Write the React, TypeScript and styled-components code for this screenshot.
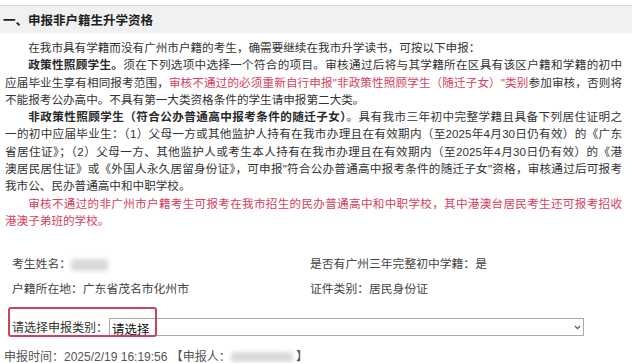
import React from "react";
import styled, { createGlobalStyle } from "styled-components";

const GlobalStyle = createGlobalStyle`
  html, body {
    margin: 0;
    padding: 0;
    background: #fff;
  }
  body {
    font-family: "Liberation Sans", "Noto Sans CJK SC", sans-serif;
    color: #333;
  }
`;

const Page = styled.div`
  width: 637px;
  height: 363px;
  overflow: hidden;
  padding-top: 5px;
  box-sizing: border-box;
`;

const SectionHeader = styled.div`
  width: 632px;
  height: 28px;
  box-sizing: border-box;
  border-top: 1px solid #d6d6d6;
  background: #f1f1f1;
  padding-left: 3px;
  display: flex;
  align-items: center;
`;

const SectionTitle = styled.h3`
  margin: 0;
  font-size: 12.5px;
  font-weight: 700;
  color: #1e1e1e;
`;

const Notice = styled.div`
  width: 617px;
  margin: 6px 0 0 5px;
  font-size: 11.6px;
  line-height: 17.3px;
  color: #333;
`;

const Line = styled.div<{ $indent?: boolean; $last?: boolean }>`
  text-indent: ${(p) => (p.$indent ? "2em" : "0")};
  text-align: justify;
  text-align-last: ${(p) => (p.$last ? "left" : "justify")};
`;

const Strong = styled.span`
  font-weight: 700;
  color: #2a2a2a;
`;

const Warn = styled.span`
  color: #d6405e;
`;

const InfoGrid = styled.div`
  display: grid;
  grid-template-columns: 298px 1fr;
  margin: 23px 0 0 12px;
  font-size: 11.8px;
  line-height: 25px;
  color: #444;
`;

const InfoItem = styled.div`
  display: flex;
  align-items: center;
`;

const Masked = styled.span<{ $w: number; $h: number }>`
  display: inline-block;
  width: ${(p) => p.$w}px;
  height: ${(p) => p.$h}px;
  background: #d9d9d9;
  border-radius: 3px;
  filter: blur(2px);
  vertical-align: middle;
`;

const SelectRow = styled.div`
  position: relative;
  margin-top: 9.5px;
  height: 30px;
  padding-left: 12px;
  display: flex;
  align-items: center;
`;

const SelectLabel = styled.span`
  font-size: 12px;
  color: #333;
`;

const SelectWrap = styled.div`
  position: relative;
  margin-left: 1px;
  width: 475px;
  height: 18px;
`;

const TypeSelect = styled.select`
  appearance: none;
  width: 100%;
  height: 100%;
  box-sizing: border-box;
  border: 1px solid #a9a9a9;
  border-radius: 0;
  background: #fff;
  padding: 0 2px;
  font-family: "Noto Sans CJK SC", sans-serif;
  font-size: 12.5px;
  color: #111;
  outline: none;
`;

const Chevron = styled.svg`
  position: absolute;
  right: 3px;
  top: 7px;
  pointer-events: none;
`;

const Highlight = styled.div`
  position: absolute;
  left: 8px;
  top: -5px;
  width: 149px;
  height: 30px;
  box-sizing: border-box;
  border: 2px solid #c8455f;
  border-radius: 3px;
  pointer-events: none;
`;

const Footer = styled.div`
  margin-top: 6px;
  padding-left: 4px;
  font-size: 12px;
  line-height: 18px;
  color: #555;
  display: flex;
  align-items: center;
  white-space: pre;
`;

export default function App() {
  return (
    <Page>
      <GlobalStyle />
      <SectionHeader>
        <SectionTitle>一、申报非户籍生升学资格</SectionTitle>
      </SectionHeader>
      <Notice>
        <Line $indent $last>
          在我市具有学籍而没有广州市户籍的考生，确需要继续在我市升学读书，可按以下申报：
        </Line>
        <Line $indent>
          <Strong>政策性照顾学生。</Strong>
          须在下列选项中选择一个符合的项目。审核通过后将与其学籍所在区具有该区户籍和学籍的初中
        </Line>
        <Line>
          应届毕业生享有相同报考范围，
          <Warn>审核不通过的必须重新自行申报"非政策性照顾学生（随迁子女）"类别</Warn>
          参加审核，否则将
        </Line>
        <Line $last>不能报考公办高中。不具有第一大类资格条件的学生请申报第二大类。</Line>
        <Line $indent>
          <Strong>非政策性照顾学生（符合公办普通高中报考条件的随迁子女）</Strong>
          。具有我市三年初中完整学籍且具备下列居住证明之
        </Line>
        <Line>
          一的初中应届毕业生：（1）父母一方或其他监护人持有在我市办理且在有效期内（至2025年4月30日仍有效）的《广东
        </Line>
        <Line>
          省居住证》；（2）父母一方、其他监护人或考生本人持有在我市办理且在有效期内（至2025年4月30日仍有效）的《港
        </Line>
        <Line>
          澳居民居住证》或《外国人永久居留身份证》，可申报"符合公办普通高中报考条件的随迁子女"资格，审核通过后可报考
        </Line>
        <Line $last>我市公、民办普通高中和中职学校。</Line>
        <Line $indent>
          <Warn>审核不通过的非广州市户籍考生可报考在我市招生的民办普通高中和中职学校，其中港澳台居民考生还可报考招收</Warn>
        </Line>
        <Line $last>
          <Warn>港澳子弟班的学校。</Warn>
        </Line>
      </Notice>
      <InfoGrid>
        <InfoItem>
          考生姓名：<Masked $w={37} $h={12} />
        </InfoItem>
        <InfoItem>是否有广州三年完整初中学籍：是</InfoItem>
        <InfoItem>户籍所在地：广东省茂名市化州市</InfoItem>
        <InfoItem>证件类别：居民身份证</InfoItem>
      </InfoGrid>
      <SelectRow>
        <SelectLabel>请选择申报类别：</SelectLabel>
        <SelectWrap>
          <TypeSelect defaultValue="">
            <option value="">请选择</option>
            <option value="1">政策性照顾学生</option>
            <option value="2">非政策性照顾学生（随迁子女）</option>
          </TypeSelect>
          <Chevron width="7" height="5" viewBox="0 0 7 5">
            <polyline points="1,1 3.5,3.6 6,1" fill="none" stroke="#555" strokeWidth="1.2" />
          </Chevron>
        </SelectWrap>
        <Highlight />
      </SelectRow>
      <Footer>
        申报时间：2025/2/19 16:19:56 【申报人：<Masked $w={62} $h={10} /> 】
      </Footer>
    </Page>
  );
}
